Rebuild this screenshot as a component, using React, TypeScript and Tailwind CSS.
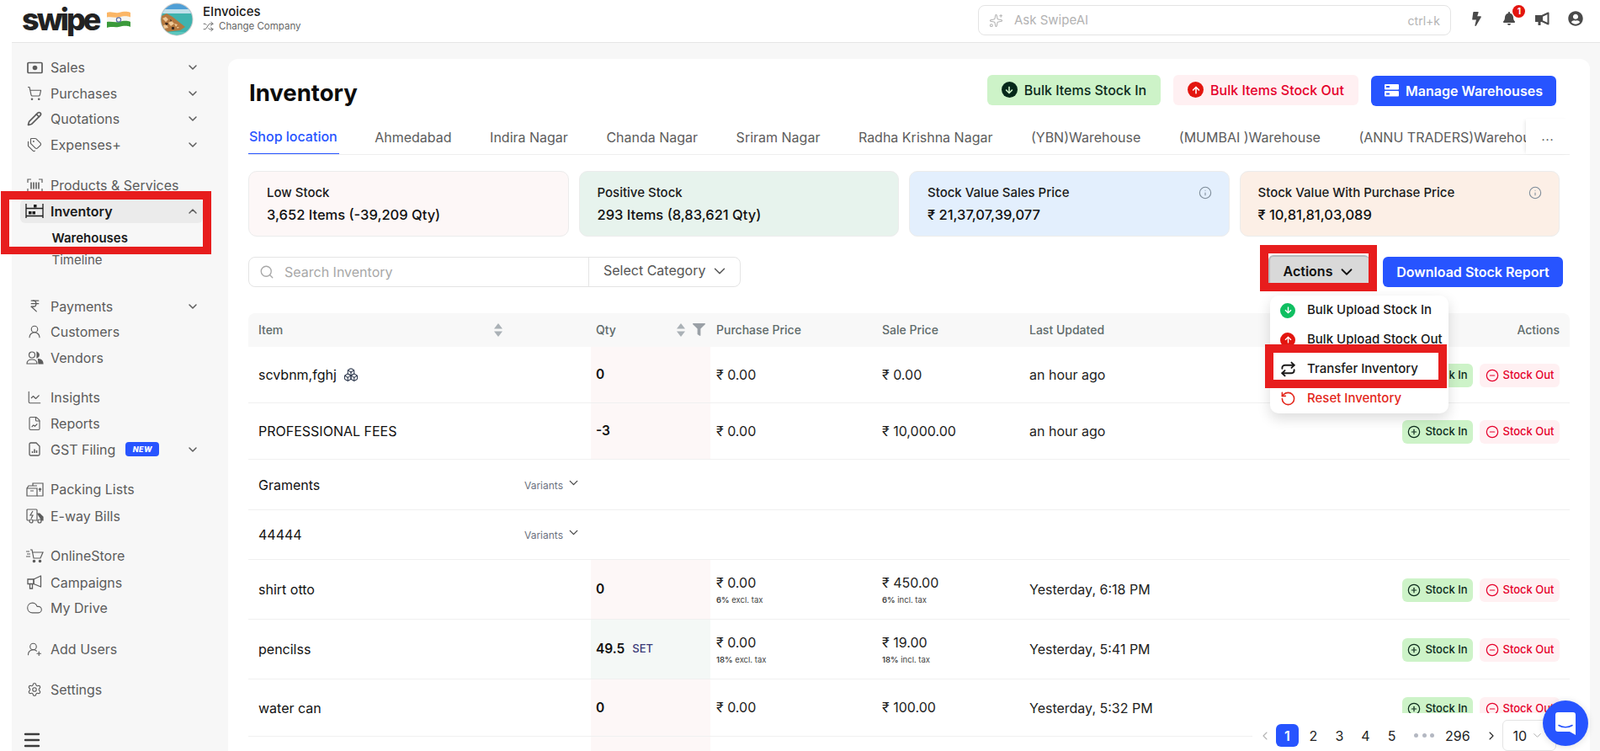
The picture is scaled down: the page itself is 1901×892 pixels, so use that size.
import {
  Boxes,
  ChevronDown,
  ChevronLeft,
  ChevronRight,
  ChevronUp,
  CircleMinus,
  CirclePlus,
  Cloud,
  FileChartLine,
  IndianRupee,
  Info,
  Menu,
  Pencil,
  Repeat,
  RotateCcw,
  Search,
  Settings,
  Shuffle,
  ShoppingCart,
  Sparkles,
  Tags,
  UserRound,
  UserRoundPlus,
  ChartLine,
} from 'lucide-react'
import { FaArrowDown, FaArrowUp, FaBell, FaBolt, FaFilter, FaUserCircle } from 'react-icons/fa'
import type { ReactNode } from 'react'

function FlagIcon() {
  return (
    <svg width="30" height="22" viewBox="0 0 30 22" className="shrink-0">
      <path d="M1 3c5-2 9 1 14 0s9-2 14 0v6c-5-2-9-1-14 0s-9-1-14 0z" fill="#fbb666" />
      <path d="M1 8.500c5-1 9 1 14 0s9-2 14 0v6c-5-2-9-1-14 0s-9-1-14 0z" fill="#f6f6f2" />
      <path d="M1 14c5-1 9 1 14 0s9-2 14 0v6c-5-2-9-1-14 0s-9-1-14 1z" fill="#3b9a3b" />
      <circle cx="15" cy="11.500" r="2.600" fill="none" stroke="#5b6ea8" strokeWidth="1.200" />
    </svg>
  )
}

function CompanyAvatar() {
  return (
    <svg width="40" height="40" viewBox="0 0 40 40" className="shrink-0">
      <defs>
        <clipPath id="avatar-clip">
          <circle cx="20" cy="20" r="18.500" />
        </clipPath>
      </defs>
      <circle cx="20" cy="20" r="19.500" fill="#c9cbcb" />
      <g clipPath="url(#avatar-clip)">
        <rect width="40" height="14" fill="#4f9fd6" />
        <rect y="8" width="40" height="6" fill="#bfe0ea" />
        <rect y="13" width="40" height="27" fill="#3fb3ae" />
        <path d="M0 17 8 13 15 17 30 29 24 33 6 35 0 32z" fill="#b4783f" />
        <path d="M3 19l4-2 3 3-3 3zM10 24l4-2 3 3-4 3zM17 25l4 1-2 3zM4 27l4-1 2 4-5 1zM20 29l3 0-2 2z" fill="#efc795" />
        <path d="M6 24l3 0 1 2-3 1zM12 20l2 1-1 2zM14 29l3 0 0 3-3 0z" fill="#3d2a20" />
        <rect y="35" width="40" height="5" fill="#5cc7bd" />
      </g>
    </svg>
  )
}

function SalesIcon() {
  return (
    <svg width="19" height="15" viewBox="0 0 19 15" className="shrink-0" fill="none" stroke="#5c5c5c" strokeWidth="1.700">
      <rect x="1" y="1.500" width="17" height="12" rx="1" />
      <circle cx="9.500" cy="7.500" r="2.800" fill="#5c5c5c" stroke="none" />
    </svg>
  )
}

function BarcodeIcon() {
  return (
    <svg width="19" height="17" viewBox="0 0 19 17" className="shrink-0" fill="none" stroke="#5c5c5c" strokeWidth="1.200">
      <path d="M1 5V1h4M14 1h4v4M1 12v4h4M14 16h4v-4" />
      <path d="M5 4.500v8M8 4.500v8M11 4.500v8M14 4.500v8" strokeWidth="1.600" />
    </svg>
  )
}

function InventoryIcon() {
  return (
    <svg width="22" height="17" viewBox="0 0 22 17" className="shrink-0" fill="none" stroke="#1a1a1a" strokeWidth="1.300">
      <path d="M1 0v17M21 0v17M1 5.500h20M1 14.500h20" />
      <rect x="4" y="9" width="3.500" height="3.500" fill="#1a1a1a" stroke="none" />
      <rect x="8.500" y="9" width="3.500" height="3.500" fill="#1a1a1a" stroke="none" />
      <rect x="10" y="1" width="3.500" height="3.500" fill="#1a1a1a" stroke="none" />
    </svg>
  )
}

function PackingIcon() {
  return (
    <svg width="21" height="17" viewBox="0 0 21 17" className="shrink-0" fill="none" stroke="#5c5c5c" strokeWidth="1.200">
      <path d="M1 7h12v9H1zM1 7l2-3h10M5 10h4" />
      <path d="M8 4V1h12v15h-7" />
      <path d="M16.500 11V7M15 8.500l1.500-1.500 1.500 1.500" />
    </svg>
  )
}

function TruckIcon() {
  return (
    <svg width="21" height="18" viewBox="0 0 21 18" className="shrink-0" fill="none" stroke="#5c5c5c" strokeWidth="1.200">
      <path d="M4 14H2a1 1 0 0 1-1-1V2a1 1 0 0 1 1-1h10a1 1 0 0 1 1 1v12H8" />
      <path d="M13 6h3l4 4v4h-2" fill="#5c5c5c" />
      <circle cx="6" cy="15" r="2" />
      <circle cx="16" cy="15" r="2" />
      <path d="M8 3 5 8h3L6 12" />
    </svg>
  )
}

function StoreCartIcon() {
  return (
    <svg width="21" height="17" viewBox="0 0 21 17" className="shrink-0" fill="none" stroke="#5c5c5c" strokeWidth="1.200">
      <path d="M5 1h2l2 10h8l3-7H7.500" />
      <path d="M0 3h4M1 6h4M0 9h5" />
      <circle cx="9.500" cy="14.500" r="1.200" fill="#5c5c5c" />
      <circle cx="16.500" cy="14.500" r="1.200" fill="#5c5c5c" />
    </svg>
  )
}

function GstIcon() {
  return (
    <svg width="14" height="17" viewBox="0 0 14 17" className="shrink-0" fill="none" stroke="#5c5c5c" strokeWidth="1.300">
      <path d="M2.500 1H9l4 4v9.500a1.500 1.500 0 0 1-1.500 1.500h-9A1.500 1.500 0 0 1 1 14.500v-12A1.500 1.500 0 0 1 2.500 1z" />
      <path d="M4.500 13v-2M7 13V8.500M9.500 13v-3" strokeWidth="1.500" />
    </svg>
  )
}

function VendorsIcon() {
  return (
    <svg width="21" height="16" viewBox="0 0 21 16" className="shrink-0" fill="none" stroke="#5c5c5c" strokeWidth="1.200">
      <circle cx="7" cy="4.500" r="3.500" />
      <path d="M1 15c0-3.500 2.500-5 6-5s6 1.500 6 5z" />
      <path d="M13 1.200a3.500 3.500 0 0 1 0 6.600z" fill="#5c5c5c" />
      <path d="M14.500 9.500c3 .3 5.500 2 5.500 5.500h-5z" fill="#5c5c5c" />
    </svg>
  )
}

function CampaignIcon() {
  return (
    <svg width="18" height="17" viewBox="0 0 18 17" className="shrink-0" fill="none" stroke="#5c5c5c" strokeWidth="1.300">
      <path d="M8 5 16.500 1v13L8 10.500z" strokeLinejoin="round" />
      <path d="M1 5h7v5.500H1zM3.500 10.500V16h3v-5.500" />
    </svg>
  )
}

function HeaderMegaphone() {
  return (
    <svg width="17" height="17" viewBox="0 0 17 17" className="shrink-0" fill="none" stroke="#4a4a4a" strokeWidth="2">
      <path d="M8 5 15.500 1.500v13L8 11z" strokeLinejoin="round" />
      <path d="M1 5h7v6H1z" fill="#4a4a4a" />
      <path d="M3.500 11v5h3v-5" fill="#4a4a4a" stroke="none" />
    </svg>
  )
}

function SortArrows({ className = '' }: { className?: string }) {
  return (
    <svg width="10" height="16" viewBox="0 0 10 16" className={className} fill="#aab1b6">
      <path d="M5 0 10 6.500H0z" />
      <path d="M5 16 0 9.500h10z" />
    </svg>
  )
}

function NavRow({
  icon,
  label,
  chevron,
  badge,
  className = '',
}: {
  icon: ReactNode
  label: string
  chevron?: boolean
  badge?: boolean
  className?: string
}) {
  return (
    <div className={`flex h-[30.5px] items-center pr-[34px] text-[#5c5c5c] ${className}`}>
      <span className="flex w-[22px] shrink-0 justify-center">{icon}</span>
      <span className="ml-[8px] text-[16px] leading-[20px]">{label}</span>
      {badge && (
        <span className="ml-[12px] flex h-[17px] w-[40px] items-center justify-center rounded-[4px] bg-[#2754ff] text-[9px] font-extrabold italic tracking-[0.5px] text-white">
          NEW
        </span>
      )}
      {chevron && <ChevronDown className="ml-auto h-[16px] w-[16px]" strokeWidth={2.2} />}
    </div>
  )
}

function Sidebar() {
  const ic = 'h-[18px] w-[18px]'
  return (
    <aside className="w-[257px] shrink-0 bg-[#f7f7f7] pl-[16px] pt-[14px]">
      <NavRow icon={<SalesIcon />} label="Sales" chevron />
      <NavRow icon={<ShoppingCart className={ic} strokeWidth={1.5} />} label="Purchases" chevron />
      <NavRow icon={<Pencil className={ic} strokeWidth={2.2} />} label="Quotations" chevron />
      <NavRow icon={<Tags className={ic} strokeWidth={1.5} />} label="Expenses+" chevron />

      <NavRow className="mt-[18px]" icon={<BarcodeIcon />} label="Products & Services" />
      <div className="relative -ml-[6px] mr-[30px] mt-[1px] flex h-[28px] items-center rounded-[6px] bg-[#ebebeb] pl-[6px] pr-[4px] text-[#1a1a1a]">
        <span className="flex w-[22px] shrink-0 justify-center">
          <InventoryIcon />
        </span>
        <span className="ml-[8px] text-[16px] font-semibold">Inventory</span>
        <ChevronUp className="ml-auto h-[16px] w-[16px] text-[#5c5c5c]" strokeWidth={2.2} />
      </div>
      <div className="ml-[31.500px] mt-[9px] h-[18px] text-[15px] font-semibold leading-[18px] text-[#1a1a1a]">Warehouses</div>
      <div className="ml-[31.500px] mt-[8px] h-[18px] text-[15px] leading-[18px] text-[#5c5c5c]">Timeline</div>

      <NavRow className="mt-[31px]" icon={<IndianRupee className="h-[17px] w-[17px]" strokeWidth={1.8} />} label="Payments" chevron />
      <NavRow icon={<UserRound className={ic} strokeWidth={1.5} />} label="Customers" />
      <NavRow icon={<VendorsIcon />} label="Vendors" />

      <NavRow className="mt-[17px]" icon={<ChartLine className={ic} strokeWidth={1.5} />} label="Insights" />
      <NavRow className="mt-[0.500px]" icon={<FileChartLine className={ic} strokeWidth={1.5} />} label="Reports" />
      <NavRow icon={<GstIcon />} label="GST Filing" badge chevron />

      <NavRow className="mt-[17px]" icon={<PackingIcon />} label="Packing Lists" />
      <NavRow className="mt-[1px]" icon={<TruckIcon />} label="E-way Bills" />

      <NavRow className="mt-[17px]" icon={<StoreCartIcon />} label="OnlineStore" />
      <NavRow className="mt-[1px]" icon={<CampaignIcon />} label="Campaigns" />
      <NavRow icon={<Cloud className="h-[20px] w-[20px]" strokeWidth={1.3} />} label="My Drive" />

      <NavRow className="mt-[18px]" icon={<UserRoundPlus className={ic} strokeWidth={1.5} />} label="Add Users" />
      <NavRow className="mt-[18px]" icon={<Settings className={ic} strokeWidth={1.5} />} label="Settings" />

      <Menu className="-ml-[4px] mt-[32px] h-[24px] w-[24px] text-[#3c3c3c]" strokeWidth={2.4} />
    </aside>
  )
}

function Header() {
  return (
    <header className="ml-[14px] flex h-[51px] items-start border-b border-[#e6e6e6] bg-white">
      <div className="flex h-[46px] w-[176px] shrink-0 items-center">
        <span className="ml-[12px] font-[family-name:'Noto_Sans'] text-[36px] font-extrabold leading-[46px] tracking-[-3px] text-[#222]">swipe</span>
        <span className="ml-[9px]">
          <FlagIcon />
        </span>
      </div>
      <div className="mt-[3px]">
        <CompanyAvatar />
      </div>
      <div className="ml-[11px] mt-[5px]">
        <div className="text-[15px] font-medium leading-[18px] text-[#1a1a1a]">EInvoices</div>
        <div className="mt-[1px] flex items-center text-[11.500px] leading-[15px] text-[#666]">
          <Shuffle className="h-[13px] w-[13px]" strokeWidth={1.8} />
          <span className="ml-[6px]">Change Company</span>
        </div>
      </div>
      <div className="ml-auto mt-[6px] flex h-[36px] w-[562px] items-center rounded-[8px] border border-[#e4e4e4] px-[12px] text-[#b3b3b3]">
        <Sparkles className="h-[17px] w-[17px]" strokeWidth={1.5} />
        <span className="ml-[13px] text-[15px]">Ask SwipeAI</span>
        <span className="ml-auto text-[14px]">ctrl+k</span>
      </div>
      <div className="ml-[22px] mr-[20px] mt-[13px] flex w-[135px] items-center justify-between text-[#4a4a4a]">
        <FaBolt className="h-[17px] w-[17px]" />
        <span className="relative">
          <FaBell className="h-[16px] w-[16px]" />
          <span className="absolute -right-[11px] -top-[8px] flex h-[15px] w-[15px] items-center justify-center rounded-full bg-[#e3150f] text-[10px] font-bold text-white">
            1
          </span>
        </span>
        <HeaderMegaphone />
        <FaUserCircle className="h-[18px] w-[18px]" />
      </div>
    </header>
  )
}

const tabs = [
  'Ahmedabad',
  'Indira Nagar',
  'Chanda Nagar',
  'Sriram Nagar',
  'Radha Krishna Nagar',
  '(YBN)Warehouse',
  '(MUMBAI )Warehouse',
  '(ANNU TRADERS)Warehouse',
]

function Tabs() {
  return (
    <div className="mt-[15px] flex h-[43px] border-b border-[#eeeeee]">
      <div className="flex min-w-0 flex-1 gap-[45.500px] overflow-hidden">
        <div className="-mb-px -mr-[3px] flex shrink-0 items-center border-b-2 border-[#2754ff] pl-[1px] pr-[2px] pt-[1px] text-[16px] font-medium text-[#2754ff]">
          Shop location
        </div>
        {tabs.map(t => (
          <div key={t} className="flex shrink-0 items-center whitespace-nowrap pt-[1px] text-[16px] text-[#5c5c5c]">
            {t}
          </div>
        ))}
      </div>
      <div className="flex w-[52px] shrink-0 items-center justify-center pb-[2px] text-[14px] tracking-[1px] text-[#444] shadow-[-3px_0_4px_-2px_rgba(0,0,0,0.1)]">
        ...
      </div>
    </div>
  )
}

function StatCard({
  label,
  value,
  bg,
  info,
}: {
  label: string
  value: string
  bg: string
  info?: boolean
}) {
  return (
    <div className={`relative h-[78px] rounded-[10px] border border-[#ececec] pl-[21px] pt-[16px] ${bg}`}>
      <div className="text-[15px] font-medium leading-[18px] text-[#1a1a1a]">{label}</div>
      <div className="mt-[7px] text-[16.500px] font-medium leading-[20px] text-[#111]">{value}</div>
      {info && <Info className="absolute right-[20px] top-[17px] h-[16px] w-[16px] text-[#7d8b99]" strokeWidth={1.6} />}
    </div>
  )
}

function StockButtons() {
  return (
    <div className="mt-[2px] flex justify-end gap-[8px] pr-[12px] text-[13px] font-medium">
      <button className="flex h-[28px] w-[84px] items-center justify-center gap-[5px] rounded-[6px] bg-[#cdf3c8] text-[#0c2a1c]">
        <CirclePlus className="h-[16px] w-[16px]" strokeWidth={1.8} />
        Stock In
      </button>
      <button className="flex h-[28px] w-[95px] items-center justify-center gap-[5px] rounded-[6px] bg-[#fff0f2] text-[#e5002b]">
        <CircleMinus className="h-[16px] w-[16px]" strokeWidth={1.8} />
        Stock Out
      </button>
    </div>
  )
}

type RowData = {
  name: string
  boxes?: boolean
  qty: string
  unit?: string
  tone?: 'red' | 'green'
  buy: string
  buyTax?: string
  sale: string
  saleTax?: string
  updated: string
  height: string
}

const rowGrid = 'grid grid-cols-[407px_142px_197px_175px_1fr_auto] items-center'

function Price({ value, pct, note }: { value: string; pct?: string; note?: string }) {
  return (
    <div className="pl-[7px]">
      <div className="text-[16px] leading-[19px] text-[#222]">{value}</div>
      {pct && (
        <div className="mt-[5px] text-[9.500px] leading-[11px] text-[#444]">
          <span className="font-semibold">{pct}</span> {note}
        </div>
      )}
    </div>
  )
}

function StockRow({ row }: { row: RowData }) {
  const tone = row.tone === 'green' ? 'bg-[#f4f8f6]' : 'bg-[#fdf7f7]'
  return (
    <div className={`${rowGrid} border-b border-[#f0f0f0] ${row.height}`}>
      <div className="flex items-center pl-[12px] text-[16px] text-[#111]">
        {row.name}
        {row.boxes && <Boxes className="ml-[8px] h-[18px] w-[18px] text-[#2f3a4f]" strokeWidth={1.4} />}
      </div>
      <div className={`flex h-full items-center pl-[6px] ${tone}`}>
        <span className="text-[15.500px] font-semibold text-[#111]">{row.qty}</span>
        {row.unit && <span className="ml-[9px] text-[13px] font-medium text-[#3b3a77]">{row.unit}</span>}
      </div>
      <Price value={row.buy} pct={row.buyTax} note="excl. tax" />
      <Price value={row.sale} pct={row.saleTax} note="incl. tax" />
      <div className="pl-[7px] text-[16px] text-[#222]">{row.updated}</div>
      <StockButtons />
    </div>
  )
}

function VariantRow({ name, height }: { name: string; height: string }) {
  return (
    <div className={`flex items-center border-b border-[#f0f0f0] pl-[12px] ${height}`}>
      <div className="w-[316px] text-[16px] text-[#111]">{name}</div>
      <span className="mt-[2px] text-[12px] text-[#6b7280]">Variants</span>
      <ChevronDown className="-mt-[5px] ml-[4px] h-[17px] w-[17px] text-[#444]" strokeWidth={1.8} />
    </div>
  )
}

function InventoryTable() {
  return (
    <div className="mt-[31px]">
      <div className={`${rowGrid} h-[40px] rounded-t-[8px] bg-[#f8f8f8] pb-[1px] text-[14px] font-medium text-[#5f6b6b]`}>
        <div className="flex items-center justify-between pl-[12px] pr-[105px]">
          Item
          <SortArrows />
        </div>
        <div className="flex items-center pl-[6px]">
          Qty
          <SortArrows className="ml-[72px]" />
          <FaFilter className="ml-[9px] h-[15px] w-[15px] text-[#9aa0a6]" />
        </div>
        <div className="pl-[7px]">Purchase Price</div>
        <div className="pl-[7px]">Sale Price</div>
        <div className="pl-[7px]">Last Updated</div>
        <div className="pr-[12px] text-right">Actions</div>
      </div>
      <StockRow row={{ name: 'scvbnm,fghj', boxes: true, qty: '0', buy: '₹ 0.00', sale: '₹ 0.00', updated: 'an hour ago', height: 'h-[67px]' }} />
      <StockRow row={{ name: 'PROFESSIONAL FEES', qty: '-3', buy: '₹ 0.00', sale: '₹ 10,000.00', updated: 'an hour ago', height: 'h-[67px]' }} />
      <VariantRow name="Graments" height="h-[60px]" />
      <VariantRow name="44444" height="h-[59px]" />
      <StockRow row={{ name: 'shirt otto', qty: '0', buy: '₹ 0.00', buyTax: '6%', sale: '₹ 450.00', saleTax: '6%', updated: 'Yesterday, 6:18 PM', height: 'h-[71px]' }} />
      <StockRow row={{ name: 'pencilss', qty: '49.5', unit: 'SET', tone: 'green', buy: '₹ 0.00', buyTax: '18%', sale: '₹ 19.00', saleTax: '18%', updated: 'Yesterday, 5:41 PM', height: 'h-[71px]' }} />
      <StockRow row={{ name: 'water can', qty: '0', buy: '₹ 0.00', sale: '₹ 100.00', updated: 'Yesterday, 5:32 PM', height: 'h-[68px]' }} />
      <div className="ml-[407px] h-[70px] w-[142px] bg-[#fdf7f7]" />
    </div>
  )
}

function ActionsMenu() {
  return (
    <div className="absolute left-[1509px] top-[351px] w-[212px] rounded-[10px] bg-white text-[15px] font-medium shadow-[0_6px_16px_rgba(0,0,0,0.14)]">
      <div className="flex h-[35px] items-center pl-[12px] text-[#1a1a1a]">
        <span className="flex h-[18px] w-[18px] items-center justify-center rounded-full bg-[#0fbf61] text-white">
          <FaArrowDown className="h-[9px] w-[9px]" />
        </span>
        <span className="ml-[14px]">Bulk Upload Stock In</span>
      </div>
      <div className="flex h-[35px] items-center pl-[12px] text-[#1a1a1a]">
        <span className="flex h-[18px] w-[18px] items-center justify-center rounded-full bg-[#e3150f] text-white">
          <FaArrowUp className="h-[9px] w-[9px]" />
        </span>
        <span className="ml-[14px]">Bulk Upload Stock Out</span>
      </div>
      <div className="flex h-[35px] items-center pl-[12px] text-[#1a1a1a]">
        <Repeat className="h-[19px] w-[19px]" strokeWidth={2.4} />
        <span className="ml-[13px]">Transfer Inventory</span>
      </div>
      <div className="flex h-[35px] items-center pl-[12px] text-[#e3261b]">
        <RotateCcw className="h-[19px] w-[19px]" strokeWidth={2} />
        <span className="ml-[13px]">Reset Inventory</span>
      </div>
    </div>
  )
}

function Pagination() {
  const pageCell = 'flex w-[31px] justify-center'
  return (
    <div className="absolute left-[1488px] top-[847px] flex h-[45px] w-[377px] items-center bg-white pl-[7px] pt-[8px] text-[16px] text-[#222]">
      <ChevronLeft className="h-[16px] w-[16px] text-[#b3b3b3]" strokeWidth={1.6} />
      <span className="ml-[5px] flex h-[27px] w-[27px] items-center justify-center rounded-[6px] bg-[#2754ff] font-semibold text-white">1</span>
      <span className="ml-[2px]" />
      <span className={pageCell}>2</span>
      <span className={pageCell}>3</span>
      <span className={pageCell}>4</span>
      <span className={pageCell}>5</span>
      <span className="ml-[11px] flex w-[24px] justify-between">
        <i className="h-[5px] w-[5px] rounded-full bg-[#b4b8c2]" />
        <i className="h-[5px] w-[5px] rounded-full bg-[#b4b8c2]" />
        <i className="h-[5px] w-[5px] rounded-full bg-[#b4b8c2]" />
      </span>
      <span className="ml-[13px]">296</span>
      <ChevronRight className="ml-[17px] h-[16px] w-[16px] text-[#222]" strokeWidth={1.6} />
      <div className="ml-[5px] flex h-[37px] w-[64px] items-center rounded-[6px] border border-[#e4e4e4] pl-[12px]">
        10
        <ChevronDown className="ml-[5px] h-[15px] w-[15px] text-[#b3b3b3]" strokeWidth={1.6} />
      </div>
    </div>
  )
}

function ChatBubble() {
  return (
    <div className="absolute left-[1833px] top-[832px] flex h-[54px] w-[54px] items-center justify-center rounded-full bg-[#2754ff] shadow-[0_1px_8px_rgba(0,0,0,0.12)]">
      <svg width="24" height="27" viewBox="0 0 24 27">
        <path d="M3 0h18a3 3 0 0 1 3 3v24l-7-4H3a3 3 0 0 1-3-3V3a3 3 0 0 1 3-3z" fill="#fff" />
        <path d="M4 15.500c4.500 3 11.500 3 16 0" fill="none" stroke="#2754ff" strokeWidth="1.600" strokeLinecap="round" />
      </svg>
    </div>
  )
}

export default function App() {
  return (
    <div className="relative h-[892px] w-[1901px] overflow-hidden bg-white font-[family-name:Inter]">
      <Header />
      <div className="ml-[14px] flex">
        <Sidebar />
        <main className="h-[841px] flex-1 bg-[#f7f7f7] pr-[12px] pt-[19px]">
          <div className="h-full rounded-t-[12px] bg-white pl-[24px] pr-[24px]">
            <div className="flex h-[56px] items-start pt-[19px]">
              <h1 className="ml-[1px] mt-[4px] text-[27.500px] font-bold leading-[34px] text-[#0b0b0b]">Inventory</h1>
              <div className="ml-auto flex gap-[15px] pr-[16px] text-[16px] font-medium">
                <button className="flex h-[36px] w-[206px] items-center justify-center gap-[8px] rounded-[6px] bg-[#cdf3c8] pb-[1px] text-[#0c2a1c]">
                  <span className="flex h-[19px] w-[19px] items-center justify-center rounded-full bg-[#06281a] text-[#cdf3c8]">
                    <FaArrowDown className="h-[10px] w-[10px]" />
                  </span>
                  Bulk Items Stock In
                </button>
                <button className="flex h-[36px] w-[220px] items-center justify-center gap-[8px] rounded-[6px] bg-[#fff0f2] pb-[1px] text-[#e5002b]">
                  <span className="flex h-[19px] w-[19px] items-center justify-center rounded-full bg-[#e3150f] text-white">
                    <FaArrowUp className="h-[10px] w-[10px]" />
                  </span>
                  Bulk Items Stock Out
                </button>
                <button className="mt-[1px] flex h-[36px] w-[220px] items-center justify-center gap-[8px] rounded-[6px] bg-[#2754ff] pb-[1px] font-semibold text-white">
                  <svg width="17" height="15" viewBox="0 0 17 15" fill="#fff">
                    <rect width="17" height="6.500" rx="1" />
                    <rect y="8" width="17" height="6.500" rx="1" />
                    <rect x="2" y="2" width="4" height="2" fill="#2754ff" />
                    <rect x="2" y="10.500" width="4" height="2" fill="#2754ff" />
                  </svg>
                  Manage Warehouses
                </button>
              </div>
            </div>

            <Tabs />

            <div className="mt-[19px] grid w-[1558px] grid-cols-4 gap-[12px]">
              <StatCard label="Low Stock" value="3,652 Items (-39,209 Qty)" bg="bg-[#fdf7f7]" />
              <StatCard label="Positive Stock" value="293 Items (8,83,621 Qty)" bg="bg-[#e7f3ed]" />
              <StatCard label="Stock Value Sales Price" value="₹ 21,37,07,39,077" bg="bg-[#e3effd]" info />
              <StatCard label="Stock Value With Purchase Price" value="₹ 10,81,81,03,089" bg="bg-[#fcefe6]" info />
            </div>

            <div className="mt-[24px] flex h-[36px] items-center pr-[8px]">
              <div className="flex h-[36px] w-[585px] items-center rounded-[8px] border border-[#e4e4e4]">
                <div className="flex w-[404px] items-center border-r border-[#e4e4e4] pl-[12px] text-[#a8a8a8]">
                  <Search className="h-[18px] w-[18px]" strokeWidth={1.8} />
                  <span className="flex h-[34px] items-center pb-[1px] pl-[12px] text-[16px]">Search Inventory</span>
                </div>
                <div className="-mt-[4px] flex flex-1 items-center pl-[17px] text-[16px] text-[#555]">
                  Select Category
                  <ChevronDown className="ml-[6px] mt-[2px] h-[22px] w-[22px]" strokeWidth={1.6} />
                </div>
              </div>
              <button className="ml-auto flex h-[38px] w-[120px] items-center justify-center gap-[6px] self-end rounded-[6px] border-l-2 border-t-2 border-[#b4bbbf] bg-[#d9d9d9] pb-[3px] text-[16px] font-semibold text-[#111]">
                Actions
                <ChevronDown className="mt-[2px] h-[22px] w-[22px]" strokeWidth={2} />
              </button>
              <button className="ml-[16px] h-[36px] w-[214px] rounded-[6px] bg-[#2754ff] pb-[1px] text-[16px] font-semibold text-white">
                Download Stock Report
              </button>
            </div>

            <InventoryTable />
          </div>
        </main>
      </div>

      <ActionsMenu />
      <Pagination />
      <ChatBubble />

      {/* red annotation frames from the screenshot */}
      <div className="absolute left-[1px] top-[227px] h-[75px] w-[250px] border-[10px] border-b-[9px] border-[#e71d1d]" />
      <div className="absolute left-[1497px] top-[291px] h-[55px] w-[139px] border-[10px] border-[#e71d1d]" />
      <div className="absolute left-[1503px] top-[409px] h-[52px] w-[216px] border-[10px] border-[#e71d1d]" />
    </div>
  )
}
